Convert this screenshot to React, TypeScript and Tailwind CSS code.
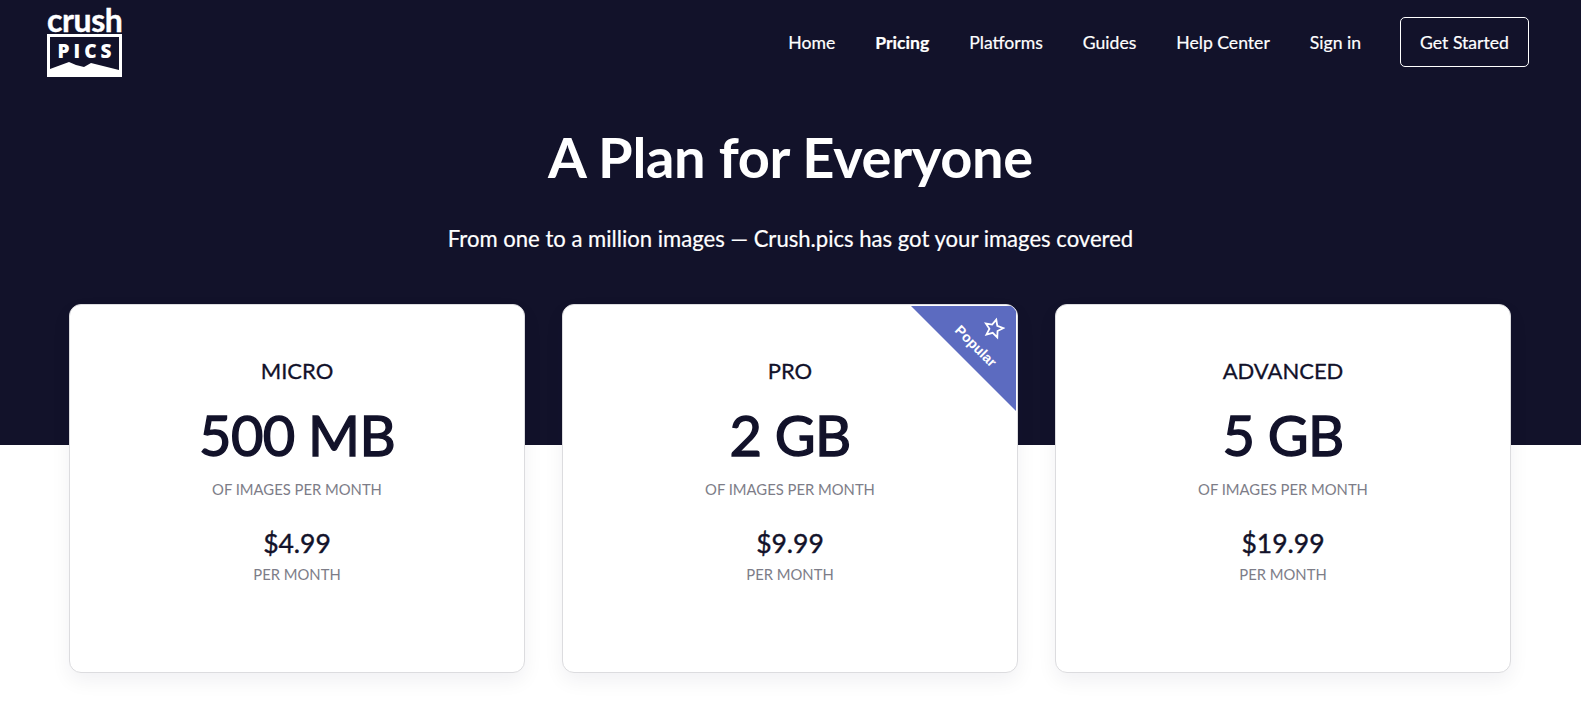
interface Plan {
  name: string
  size: string
  price: string
  popular?: boolean
}

const navLinks = ["Home", "Pricing", "Platforms", "Guides", "Help Center", "Sign in"]

const plans: Plan[] = [
  { name: "MICRO", size: "500 MB", price: "$4.99" },
  { name: "PRO", size: "2 GB", price: "$9.99", popular: true },
  { name: "ADVANCED", size: "5 GB", price: "$19.99" },
]

function Logo() {
  return (
    <div className="flex w-[75px] flex-col items-stretch text-white">
      <span className="text-center text-[32px] leading-[24px] font-bold tracking-[-0.4px] [-webkit-text-stroke:0.4px_#fff]">crush</span>
      <div className="relative mt-[2px] h-[43px] border-[3px] border-white">
        <span className="block pt-[4px] pl-[4px] text-center font-['Open_Sans',sans-serif] text-[19px] leading-[20px] font-extrabold tracking-[4px]">
          PICS
        </span>
        {/* mountains along the bottom of the box */}
        <svg viewBox="0 0 69 12" className="absolute bottom-0 left-0 h-[12px] w-[69px]">
          <path d="M0 12V7L19 0L26 3L34 5L41 1L69 8V12Z" fill="#fff" />
        </svg>
      </div>
    </div>
  )
}

function PopularStar() {
  return (
    <svg viewBox="0 0 24 24" className="absolute top-[11px] right-[11px] h-[22px] w-[22px] rotate-[15deg]">
      <path
        d="M12 2.5L14.9 8.9L21.8 9.6L16.6 14.2L18.1 21L12 17.5L5.9 21L7.4 14.2L2.2 9.6L9.1 8.9Z"
        fill="none"
        stroke="#fff"
        strokeWidth="2"
      />
    </svg>
  )
}

function PlanCard({ plan }: { plan: Plan }) {
  return (
    <div className="relative flex h-[369px] flex-col items-center overflow-hidden rounded-[12px] border border-[#dcdcdf] bg-white pt-[52px] shadow-[0_8px_20px_rgba(20,20,50,0.06)]">
      {plan.popular && (
        <div className="absolute top-[1px] right-[1px] h-[105px] w-[105px] bg-[#5c6bc0] [clip-path:polygon(0_0,100%_0,100%_100%)]">
          <span className="absolute top-[32px] right-[14px] rotate-45 font-['Liberation_Sans',sans-serif] text-[14px] leading-[16px] font-bold text-white">
            Popular
          </span>
          <PopularStar />
        </div>
      )}
      <h3 className="text-[22px] leading-[28px] text-[#12122a] [-webkit-text-stroke:0.3px_#12122a]">{plan.name}</h3>
      <div className="mt-[18px] text-[56px] leading-[64px] tracking-[-0.7px] text-[#12122a] [-webkit-text-stroke:1.4px_#12122a]">
        {plan.size}
      </div>
      <div className="mt-[11px] text-[14.8px] leading-[22px] text-[#7d7d88]">OF IMAGES PER MONTH</div>
      <div className="mt-[25px] text-[26.5px] leading-[36px] text-[#12122a] [-webkit-text-stroke:0.4px_#12122a]">{plan.price}</div>
      <div className="mt-[2px] text-[14.8px] leading-[22px] text-[#7d7d88]">PER MONTH</div>
    </div>
  )
}

export default function App() {
  return (
    <div className="h-[727px] overflow-hidden bg-white font-['Lato',sans-serif]">
      <section className="h-[445px] bg-[#12122a] text-white">
        <header className="flex items-start justify-between pt-[17px] pr-[52px] pl-[47px]">
          <div className="-mt-[9px]">
            <Logo />
          </div>
          <nav className="flex items-center gap-[40px] text-[17.6px] leading-[28px] [-webkit-text-stroke:0.2px_#fff]">
            {navLinks.map((link) => (
              <a key={link} className={link === "Pricing" ? "mt-[2px] font-bold" : "mt-[2px]"}>
                {link}
              </a>
            ))}
            <a className="-ml-[1px] flex h-[50px] w-[129px] items-center justify-center rounded-[5px] border border-white pt-[2px]">
              Get Started
            </a>
          </nav>
        </header>
        <h1 className="mt-[45px] text-center text-[56px] leading-[70px] font-bold tracking-[-0.3px]">A Plan for Everyone</h1>
        <p className="mt-[32px] text-center text-[22.1px] leading-[30px] [-webkit-text-stroke:0.2px_#fff]">
          From one to a million images — Crush.pics has got your images covered
        </p>
      </section>
      <section className="-mt-[141px] grid grid-cols-3 gap-[37px] pr-[70px] pl-[69px]">
        {plans.map((plan) => (
          <PlanCard key={plan.name} plan={plan} />
        ))}
      </section>
    </div>
  )
}
